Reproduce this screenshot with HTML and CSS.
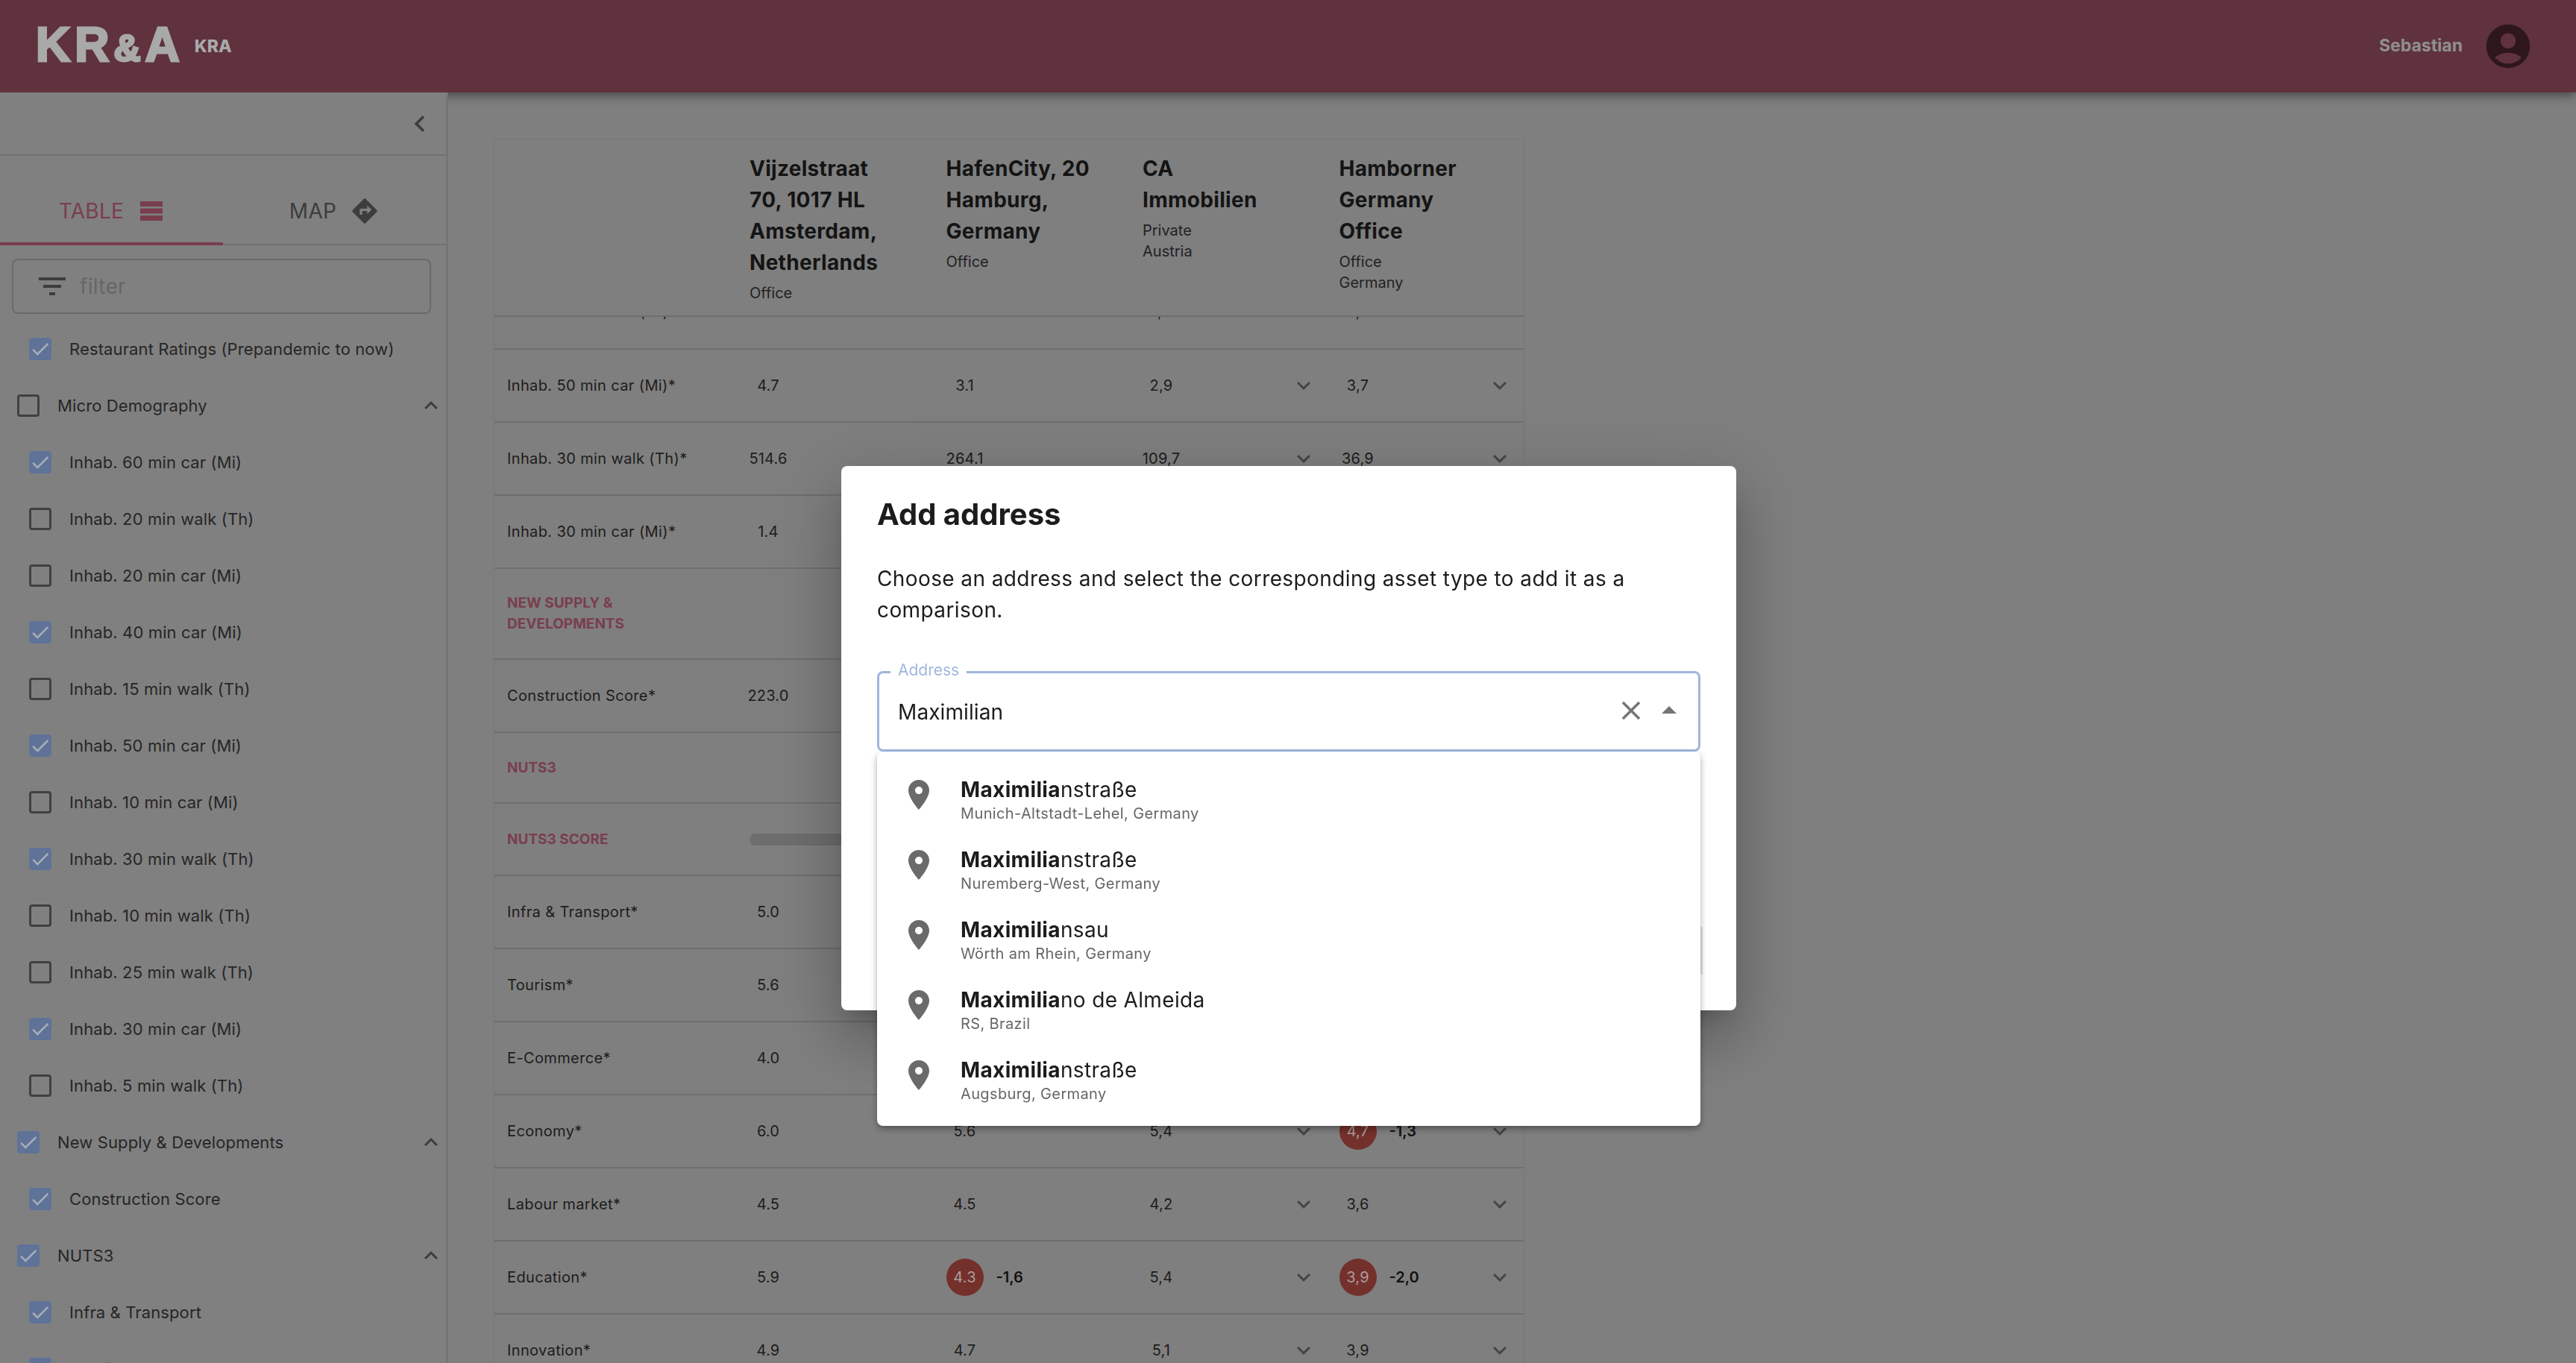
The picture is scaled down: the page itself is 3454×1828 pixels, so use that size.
FILE: index.html
```html
<!DOCTYPE html>
<html>

<head>
    <link rel="stylesheet" href="styles.css">
</head>

<body>
    <header class="topbar">
        <div class="logo">
            <span class="logo-main">KR<span class="logo-amp">&amp;</span>A</span>
            <span class="logo-sub">KRA</span>
        </div>
        <div class="user">
            <span class="user-name">Sebastian</span>
            <svg class="user-icon" viewBox="0 0 24 24"><path d="M12 2C6.48 2 2 6.48 2 12s4.48 10 10 10 10-4.48 10-10S17.52 2 12 2zm0 4c1.93 0 3.5 1.57 3.5 3.5S13.93 13 12 13s-3.5-1.57-3.5-3.5S10.07 6 12 6zm0 14c-2.03 0-4.43-.82-6.14-2.88C7.55 15.8 9.68 15 12 15s4.45.8 6.14 2.12C16.43 19.18 14.03 20 12 20z"/></svg>
        </div>
    </header>

    <div class="main">
        <aside class="sidebar">
            <div class="collapse-bar">
                <svg class="collapse-icon" viewBox="0 0 24 24"><path d="M15.41 7.41L14 6l-6 6 6 6 1.41-1.41L10.83 12z"/></svg>
            </div>
            <div class="tabs">
                <div class="tab tab-active">
                    TABLE
                    <svg class="tab-icon" viewBox="0 0 30 26"><path d="M0 0h30v7H0zM0 9.500h30v7H0zM0 19h30v7H0z"/></svg>
                </div>
                <div class="tab tab-map">
                    MAP
                    <svg class="tab-icon-map" viewBox="0 0 24 24"><path d="M21.710 11.290l-9-9c-.39-.39-1.020-.39-1.410 0l-9 9c-.39.39-.39 1.020 0 1.410l9 9c.39.39 1.020.39 1.410 0l9-9c.39-.38.39-1.010 0-1.410zM14 14.500V12h-4v3H8v-4c0-.55.45-1 1-1h5V7.500l3.500 3.500-3.500 3.500z"/></svg>
                </div>
            </div>
            <div class="filter">
                <svg class="filter-icon" viewBox="0 0 24 24"><path d="M10 18h4v-2h-4v2zM3 6v2h18V6H3zm3 7h12v-2H6v2z"/></svg>
                <span class="filter-text">filter</span>
            </div>
            <div class="list" id="list"></div>
        </aside>

        <section class="content">
            <div class="card">
                <div class="card-head">
                    <div></div>
                    <div>
                        <div class="head-title">Vijzelstraat 70, 1017 HL Amsterdam, Netherlands</div>
                        <div class="head-sub">Office</div>
                    </div>
                    <div>
                        <div class="head-title">HafenCity, 20 Hamburg, Germany</div>
                        <div class="head-sub">Office</div>
                    </div>
                    <div>
                        <div class="head-title">CA Immobilien</div>
                        <div class="head-sub">Private</div>
                        <div class="head-sub">Austria</div>
                    </div>
                    <div>
                        <div class="head-title">Hamborner Germany Office</div>
                        <div class="head-sub">Office</div>
                        <div class="head-sub">Germany</div>
                    </div>
                </div>
                <div class="card-body">
                    <div class="rows" id="rows"></div>
                </div>
            </div>
        </section>
    </div>

    <div class="backdrop">
        <div class="modal">
            <h2 class="modal-title">Add address</h2>
            <p class="modal-text">Choose an address and select the corresponding asset type to add it as a comparison.</p>
            <div class="field field-focus">
                <span class="field-label">Address</span>
                <span class="field-value">Maximilian</span>
                <svg class="clear-icon" viewBox="0 0 24 24"><path d="M19 6.410L17.590 5 12 10.590 6.410 5 5 6.410 10.590 12 5 17.590 6.410 19 12 13.410 17.590 19 19 17.590 13.410 12z"/></svg>
                <svg class="arrow-icon" viewBox="0 0 24 24"><path d="M7 14l5-5 5 5z"/></svg>
                <div class="dropdown" id="dropdown"></div>
            </div>
            <div class="field-second"></div>
        </div>
    </div>

    <script>
        const tick = '<svg viewBox="0 0 24 24"><path d="M9 16.170L4.830 12l-1.420 1.410L9 19 21 7l-1.410-1.410z"/></svg>';
        const chevronUp = '<svg class="group-arrow" viewBox="0 0 24 24"><path d="M7.410 15.410L12 10.830l4.590 4.580L18 14l-6-6-6 6z"/></svg>';
        const chevronDown = '<svg class="row-arrow" viewBox="0 0 24 24"><path d="M7.410 8.590L12 13.170l4.590-4.580L18 10l-6 6-6-6z"/></svg>';
        const pin = '<svg class="pin" viewBox="0 0 24 24"><path d="M12 2C8.130 2 5 5.130 5 9c0 5.250 7 13 7 13s7-7.750 7-13c0-3.870-3.130-7-7-7zm0 9.500c-1.380 0-2.500-1.120-2.500-2.500s1.120-2.500 2.500-2.500 2.500 1.120 2.500 2.500-1.120 2.500-2.500 2.500z"/></svg>';

        // name, checked, is group
        const filters = [
            ['Restaurant Ratings (Prepandemic to now)', 1, 0],
            ['Micro Demography', 0, 1],
            ['Inhab. 60 min car (Mi)', 1, 0],
            ['Inhab. 20 min walk (Th)', 0, 0],
            ['Inhab. 20 min car (Mi)', 0, 0],
            ['Inhab. 40 min car (Mi)', 1, 0],
            ['Inhab. 15 min walk (Th)', 0, 0],
            ['Inhab. 50 min car (Mi)', 1, 0],
            ['Inhab. 10 min car (Mi)', 0, 0],
            ['Inhab. 30 min walk (Th)', 1, 0],
            ['Inhab. 10 min walk (Th)', 0, 0],
            ['Inhab. 25 min walk (Th)', 0, 0],
            ['Inhab. 30 min car (Mi)', 1, 0],
            ['Inhab. 5 min walk (Th)', 0, 0],
            ['New Supply & Developments', 1, 1],
            ['Construction Score', 1, 0],
            ['NUTS3', 1, 1],
            ['Infra & Transport', 1, 0],
            ['Tourism', 1, 0]
        ];

        document.querySelector('#list').innerHTML = filters.map(function (item) {
            return `<div class="list-item ${item[2] ? 'list-group' : ''}">
                <span class="check ${item[1] ? 'check-on' : ''}">${item[1] ? tick : ''}</span>
                <span class="list-label">${item[0].replace('&', '&amp;')}</span>
                ${item[2] ? chevronUp : ''}
            </div>`;
        }).join('');

        // kind, label, then the four columns; a column is a value or [value, delta]
        const rows = [
            ['row row-first', 'Inhab. 40 min car (Mi)*', '3.2', '2.4', '1,9', '2,8'],
            ['row', 'Inhab. 50 min car (Mi)*', '4.7', '3.1', '2,9', '3,7'],
            ['row', 'Inhab. 30 min walk (Th)*', '514.6', '264.1', '109,7', '36,9'],
            ['row', 'Inhab. 30 min car (Mi)*', '1.4', '', '', ''],
            ['section tall', 'NEW SUPPLY & DEVELOPMENTS', '', '', '', ''],
            ['row', 'Construction Score*', '223.0', '', '', ''],
            ['section short', 'NUTS3', '', '', '', ''],
            ['section score', 'NUTS3 SCORE', 'bar', '', '', ''],
            ['row', 'Infra & Transport*', '5.0', '', '', ''],
            ['row', 'Tourism*', '5.6', '', '', ''],
            ['row', 'E-Commerce*', '4.0', '', '', ''],
            ['row', 'Economy*', '6.0', '5.6', '5,4', ['4,7', '-1,3']],
            ['row', 'Labour market*', '4.5', '4.5', '4,2', '3,6'],
            ['row', 'Education*', '5.9', ['4.3', '-1,6'], '5,4', ['3,9', '-2,0']],
            ['row', 'Innovation*', '4.9', '4.7', '5,1', '3,9']
        ];

        function renderCell(value, index) {
            let inner = '';
            if (value === 'bar') {
                inner = '<span class="score-bar"></span>';
            } else if (Array.isArray(value)) {
                inner = `<span class="value badge">${value[0]}</span><span class="delta">${value[1]}</span>`;
            } else if (value !== '') {
                inner = `<span class="value">${value}</span>`;
            }
            const arrow = index >= 2 && value !== '' ? chevronDown : '';
            return `<div class="cell">${inner}${arrow}</div>`;
        }

        document.querySelector('#rows').innerHTML = rows.map(function (row) {
            const cells = row.slice(2).map(renderCell).join('');
            return `<div class="table-row ${row[0]}"><div class="row-label">${row[1].replace('&', '&amp;')}</div>${cells}</div>`;
        }).join('');

        const options = [
            ['nstraße', 'Munich-Altstadt-Lehel, Germany'],
            ['nstraße', 'Nuremberg-West, Germany'],
            ['nsau', 'Wörth am Rhein, Germany'],
            ['no de Almeida', 'RS, Brazil'],
            ['nstraße', 'Augsburg, Germany']
        ];

        document.querySelector('#dropdown').innerHTML = options.map(function (option) {
            return `<div class="option">${pin}<div>
                <div class="option-name"><b>Maximilia</b>${option[0]}</div>
                <div class="option-sub">${option[1]}</div>
            </div></div>`;
        }).join('');
    </script>
</body>

</html>
```
FILE: styles.css
```css
* {
    box-sizing: border-box;
}

html,
body {
    height: 100%;
}

body {
    margin: 0;
    overflow: hidden;
    background-color: #7f7f7f;
    font-family: Inter, "Liberation Sans", sans-serif;
    color: #141414;
    display: flex;
    flex-direction: column;
}

.topbar {
    height: 124px;
    flex: none;
    background-color: #5f323d;
    box-shadow: 0 4px 14px rgba(0, 0, 0, 0.45);
    display: flex;
    align-items: center;
    justify-content: space-between;
    padding: 0 56px 0 48px;
    position: relative;
}

.logo {
    display: flex;
    align-items: center;
    gap: 14px;
    color: #a9a9a9;
}

.logo-main {
    font-family: "Liberation Sans", sans-serif;
    font-weight: 700;
    font-size: 64px;
    line-height: 64px;
    letter-spacing: 6px;
    -webkit-text-stroke: 3px #a9a9a9;
}

.logo-amp {
    font-size: 50px;
}

.logo-sub {
    font-weight: 800;
    font-size: 23px;
}

.user {
    display: flex;
    align-items: center;
    gap: 26px;
}

.user-name {
    font-weight: 700;
    font-size: 23px;
    color: #909090;
    padding-bottom: 2px;
}

.user-icon {
    width: 70px;
    height: 70px;
    fill: #2e171c;
}

.main {
    flex: 1;
    display: flex;
    min-height: 0;
}

.sidebar {
    width: 601px;
    flex: none;
    background-color: #808080;
    border-right: 3px solid #757575;
    position: relative;
    overflow: hidden;
}

.collapse-bar {
    height: 85px;
    border-bottom: 2px solid #707070;
    display: flex;
    align-items: center;
    justify-content: flex-end;
    padding-right: 13px;
}

.collapse-icon {
    width: 44px;
    height: 44px;
    fill: #3d3d3d;
}

.tabs {
    height: 120px;
    border-bottom: 2px solid #707070;
    display: flex;
}

.tab {
    width: 299px;
    display: flex;
    align-items: center;
    justify-content: center;
    gap: 22px;
    font-size: 28px;
    letter-spacing: 0.3px;
    color: #3d3d3d;
    padding-top: 29px;
}

.tab-active {
    color: #793e4e;
    border-bottom: 4px solid #793e4e;
    height: 120px;
    padding-right: 2px;
    padding-top: 32px;
}

.tab-map {
    gap: 18px;
}

.tab-icon {
    width: 30px;
    height: 26px;
    fill: #793e4e;
}

.tab-icon-map {
    width: 40px;
    height: 40px;
    fill: #3d3d3d;
}

.filter {
    height: 74px;
    margin: 18px 20px 0 16px;
    border: 2px solid #6a6a6a;
    border-radius: 8px;
    display: flex;
    align-items: center;
    padding-left: 28px;
    gap: 13px;
}

.filter-icon {
    width: 48px;
    height: 48px;
    fill: #3d3d3d;
}

.filter-text {
    font-size: 28px;
    letter-spacing: 0.3px;
    color: #666666;
}

.list {
    margin-top: 9px;
}

.list-item {
    height: 76px;
    display: flex;
    align-items: center;
    padding-left: 39px;
    font-size: 22px;
    letter-spacing: 0.12px;
    color: #262626;
}

.list-group {
    padding-left: 23px;
    padding-right: 2px;
}

.check {
    width: 30px;
    height: 30px;
    flex: none;
    border: 3px solid #404040;
    border-radius: 4px;
    margin-right: 24px;
}

.check-on {
    background-color: #5f7399;
    border: 0;
}

.check svg {
    display: block;
    width: 30px;
    height: 30px;
    fill: #a9aeb8;
}

.group-arrow {
    width: 36px;
    height: 36px;
    margin-left: auto;
    fill: #3d3d3d;
}

.content {
    flex: 1;
    padding: 63px 0 0 62px;
    min-width: 0;
}

.card {
    width: 1380px;
    height: 100%;
    display: flex;
    flex-direction: column;
    box-shadow: 0 0 2px rgba(0, 0, 0, 0.2);
}

.card-head {
    height: 238px;
    flex: none;
    display: grid;
    grid-template-columns: 342px repeat(4, 263.500px);
    padding-top: 18px;
    border-bottom: 2px solid #6e6e6e;
}

.card-head > div {
    padding-right: 65px;
}

.head-title {
    font-size: 28px;
    line-height: 42px;
    font-weight: 700;
    letter-spacing: 0.3px;
    color: #141414;
}

.head-sub {
    font-size: 20px;
    line-height: 28px;
    color: #222222;
}

.head-title + .head-sub {
    margin-top: 6px;
}

.card-body {
    flex: 1;
    overflow: hidden;
}

.rows {
    margin-top: -57px;
}

.table-row {
    height: 98px;
    display: grid;
    grid-template-columns: 342px repeat(4, 263.500px);
    align-items: center;
    border-bottom: 2px solid #6e6e6e;
    font-size: 20px;
    color: #1c1c1c;
}

.row-first {
    height: 101px;
}

.tall {
    height: 122px;
}

.short {
    height: 95px;
}

.score {
    height: 97px;
}

.row-label {
    padding-left: 17px;
    padding-right: 40px;
    letter-spacing: 0.37px;
}

.section .row-label {
    font-weight: 700;
    color: #793e4e;
    font-size: 19px;
    line-height: 28px;
    letter-spacing: 0;
}

.cell {
    display: flex;
    align-items: center;
    position: relative;
    padding-right: 32px;
}

.value {
    width: 50px;
    flex: none;
    display: flex;
    justify-content: center;
    white-space: nowrap;
    letter-spacing: 0.2px;
}

.badge {
    height: 50px;
    align-items: center;
    border-radius: 50%;
    background-color: #74302b;
    color: #a99d9b;
}

.delta {
    margin-left: 17px;
    font-weight: 600;
    color: #111111;
}

.score-bar {
    display: block;
    width: 230px;
    height: 16px;
    border-radius: 8px;
    background-color: #6e6e6e;
}

.row-arrow {
    width: 36px;
    height: 36px;
    fill: #454545;
    margin-left: auto;
    margin-right: -2px;
}

.backdrop {
    position: fixed;
    inset: 0;
    display: flex;
    justify-content: center;
    align-items: flex-start;
    padding-top: 625px;
    padding-left: 2px;
}

.modal {
    width: 1200px;
    height: 730px;
    background-color: #ffffff;
    border-radius: 8px;
    padding: 40px 48px 0;
    box-shadow: 0 22px 30px -14px rgba(0, 0, 0, 0.2), 0 48px 76px 6px rgba(0, 0, 0, 0.14), 0 18px 92px 16px rgba(0, 0, 0, 0.12);
}

.modal-title {
    margin: 0;
    font-size: 40px;
    line-height: 50px;
    font-weight: 700;
    color: #1c1c1c;
}

.modal-text {
    margin: 40px 0 0;
    font-size: 28px;
    line-height: 42px;
    letter-spacing: 0.4px;
    color: #1c1c1c;
}

.field {
    height: 108px;
    margin-top: 61px;
    position: relative;
    display: flex;
    align-items: center;
    border-radius: 8px;
}

.field-focus {
    border: 3px solid #a0b6de;
    padding-left: 25px;
}

.field-label {
    position: absolute;
    left: 15px;
    top: -16px;
    padding: 0 10px;
    background-color: #ffffff;
    font-size: 21px;
    line-height: 24px;
    color: #a0b6de;
}

.field-value {
    font-size: 28px;
    letter-spacing: 0.1px;
    color: #1c1c1c;
    padding-top: 2px;
}

.clear-icon {
    width: 42px;
    height: 42px;
    fill: #757575;
    margin-left: auto;
    margin-top: -3px;
}

.arrow-icon {
    width: 48px;
    height: 48px;
    fill: #757575;
    margin: -3px 15px 0 6px;
}

.field-second {
    height: 64px;
    margin: 235px -3px 0 0;
    border-right: 3px solid #e4e4e4;
}

.dropdown {
    position: absolute;
    left: -3px;
    right: -3px;
    top: 105px;
    height: 502px;
    background-color: #ffffff;
    border-radius: 8px;
    padding-top: 18px;
    box-shadow: 0 4px 8px rgba(0, 0, 0, 0.35);
    z-index: 2;
}

.option {
    height: 94px;
    display: flex;
    padding-left: 32px;
    gap: 32px;
}

.option > div {
    padding-top: 16px;
}

.pin {
    width: 48px;
    height: 48px;
    fill: #6a6a6a;
    margin-top: 16px;
}

.option-name {
    font-size: 28px;
    line-height: 34px;
    letter-spacing: 0.35px;
    color: #1c1c1c;
}

.option-name b {
    font-weight: 700;
}

.option-sub {
    font-size: 20px;
    line-height: 28px;
    margin-top: 1px;
    letter-spacing: 0.37px;
    color: #666666;
}
```
